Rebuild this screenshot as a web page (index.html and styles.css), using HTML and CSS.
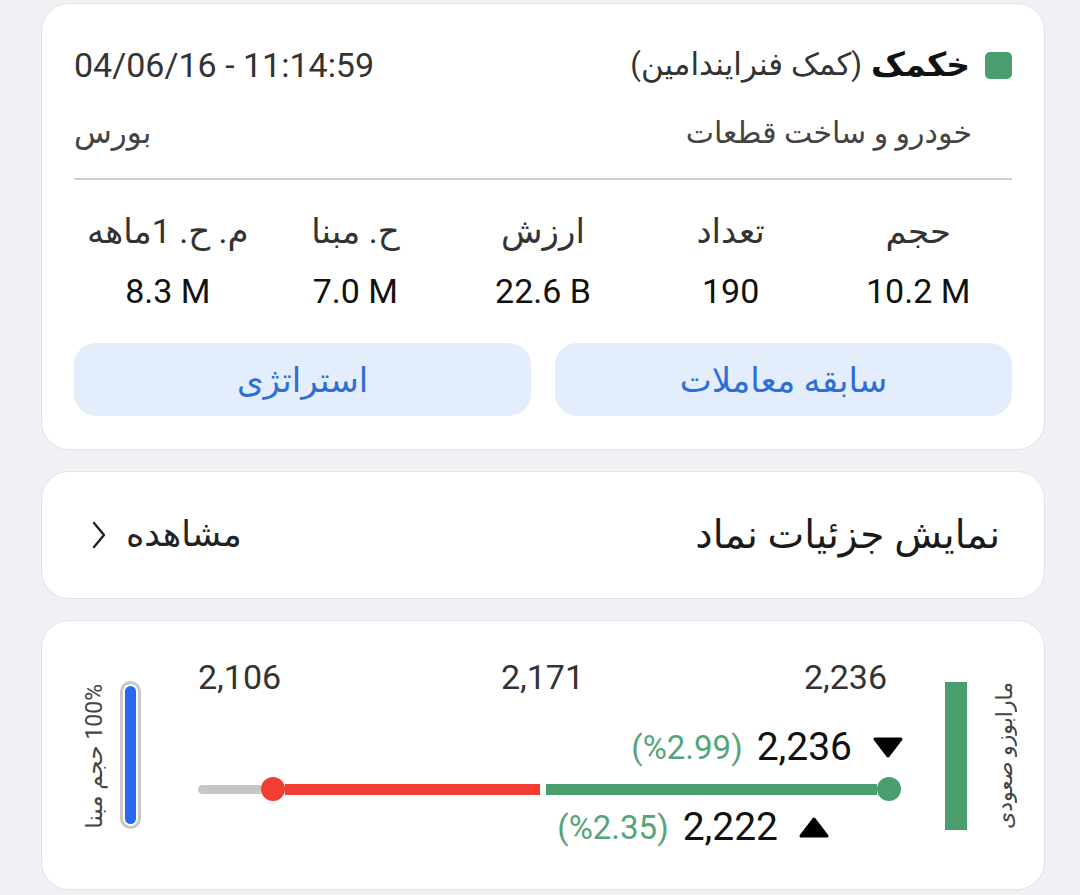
FILE: index.html
```html
<!DOCTYPE html>
<html lang="fa" dir="rtl">
<head>
<meta charset="utf-8">
<title>خکمک</title>
<link rel="stylesheet" href="styles.css">
</head>
<body>
<main class="page">
  <section class="card info">
    <div class="row head">
      <div class="symbol">
        <span class="dot"></span>
        <span class="ticker">خکمک</span>
        <span class="fullname">(کمک فنرایندامین)</span>
      </div>
      <div class="datetime" dir="ltr">04/06/16 - 11:14:59</div>
    </div>
    <div class="row sub">
      <div class="industry">خودرو و ساخت قطعات</div>
      <div class="market">بورس</div>
    </div>
    <div class="divider"></div>
    <div class="stats">
      <div class="stat"><div class="label">حجم</div><div class="value">10.2 M</div></div>
      <div class="stat"><div class="label">تعداد</div><div class="value">190</div></div>
      <div class="stat"><div class="label">ارزش</div><div class="value">22.6 B</div></div>
      <div class="stat"><div class="label">ح. مبنا</div><div class="value">7.0 M</div></div>
      <div class="stat"><div class="label">م. ح. 1ماهه</div><div class="value">8.3 M</div></div>
    </div>
    <div class="actions">
      <button class="btn" type="button">سابقه معاملات</button>
      <button class="btn" type="button">استراتژی</button>
    </div>
  </section>

  <section class="card details">
    <div class="details-title">نمایش جزئیات نماد</div>
    <div class="view">
      <span>مشاهده</span>
      <svg class="chev" width="14" height="28" viewBox="0 0 14 28"><polyline points="2,2 12,14 2,26" fill="none" stroke="#222" stroke-width="2.4" stroke-linecap="round" stroke-linejoin="round"/></svg>
    </div>
  </section>

  <section class="card range">
    <div class="vtext">100% حجم مبنا</div>
    <div class="vol"><div class="vol-fill"></div></div>
    <div class="chart">
      <div class="ticks"><span>2,106</span><span>2,171</span><span>2,236</span></div>
      <div class="quote upper">
        <span class="pct">(%2.99)</span>
        <span class="price">2,236</span>
        <svg class="tri" width="32" height="23" viewBox="0 0 32 23"><path d="M3 3 H29 L16 20 Z" fill="#000" stroke="#000" stroke-width="3" stroke-linejoin="round"/></svg>
      </div>
      <div class="slider">
        <span class="seg gray"></span>
        <span class="knob red"></span>
        <span class="seg redline"></span>
        <span class="seg greenline"></span>
        <span class="knob green"></span>
      </div>
      <div class="quote lower">
        <span class="pct">(%2.35)</span>
        <span class="price">2,222</span>
        <svg class="tri" width="32" height="23" viewBox="0 0 32 23"><path d="M3 20 H29 L16 3 Z" fill="#000" stroke="#000" stroke-width="3" stroke-linejoin="round"/></svg>
      </div>
    </div>
    <div class="mbar"></div>
    <div class="vtext right">مارابوزو صعودی</div>
  </section>
</main>
</body>
</html>
```

FILE: styles.css
```css
* {
  box-sizing: border-box;
  margin: 0;
  padding: 0;
}

html,
body {
  background: #f1f1f5;
}

body {
  font-family: Roboto, "DejaVu Sans", sans-serif;
  color: #222;
}

.page {
  padding: 3px 35px 0 41px;
  display: flex;
  flex-direction: column;
  gap: 21px;
}

.card {
  background: #fff;
  border: 1px solid #e2e2e8;
  border-radius: 28px;
}

/* ---------- info card ---------- */
.info {
  padding: 36px 32px 33px;
}

.row {
  display: flex;
  justify-content: space-between;
  align-items: center;
}

.head {
  height: 50px;
}

.symbol {
  display: flex;
  align-items: center;
  line-height: 50px;
}

.dot {
  width: 27px;
  height: 27px;
  border-radius: 5px;
  background: #4a9e6e;
  margin-left: 15px;
}

.ticker {
  font-weight: 700;
  font-size: 33px;
  color: #111;
  margin-left: 9px;
}

.fullname {
  font-size: 31px;
  color: #333;
}

.datetime {
  font-size: 34px;
  color: #333;
}

.sub {
  height: 40px;
  margin-top: 23px;
  line-height: 40px;
}

.industry {
  font-size: 30px;
  color: #444;
  margin-right: 40px;
}

.market {
  font-size: 31px;
  color: #444;
}

.divider {
  height: 2px;
  background: #d0d0d0;
  margin-top: 25px;
}

.stats {
  display: grid;
  grid-template-columns: repeat(5, 1fr);
  margin-top: 31px;
}

.stat {
  text-align: center;
}

.label {
  font-size: 34px;
  line-height: 40px;
  color: #333;
}

.value {
  font-size: 34px;
  line-height: 40px;
  color: #111;
  margin-top: 20px;
  direction: ltr;
}

.actions {
  display: grid;
  grid-template-columns: 1fr 1fr;
  gap: 24px;
  margin-top: 32px;
}

.btn {
  height: 73px;
  border: none;
  border-radius: 22px;
  background: #e4edfb;
  color: #2e6fd6;
  font: inherit;
  font-size: 34px;
}

/* ---------- details card ---------- */
.details {
  height: 128px;
  padding: 0 44px 0 50px;
  display: flex;
  align-items: center;
  justify-content: space-between;
}

.details-title {
  font-size: 39px;
  line-height: 50px;
  color: #1a1a1a;
}

.view {
  display: flex;
  align-items: center;
  gap: 20px;
  font-size: 35px;
  line-height: 50px;
  color: #222;
}

.chev {
  display: block;
}

/* ---------- range card ---------- */
.range {
  padding: 36px 29px 40px 43px;
  display: flex;
  align-items: center;
  direction: ltr;
}

.vtext {
  writing-mode: vertical-rl;
  transform: rotate(180deg);
  direction: rtl;
  font-size: 23px;
  line-height: 20px;
  width: 20px;
  color: #444;
  white-space: nowrap;
  margin-top: 6px;
}

.vtext.right {
  margin-left: 28px;
  font-size: 22px;
}

.vol {
  width: 21px;
  height: 148px;
  margin-left: 15px;
  margin-top: 4px;
  border: 3px solid #c9c9c9;
  border-radius: 11px;
  padding: 2px;
  background: #fff;
}

.vol-fill {
  height: 100%;
  background: #2469ee;
  border-radius: 6px;
}

.chart {
  width: 706px;
  margin-left: 57px;
  display: flex;
  flex-direction: column;
}

.ticks {
  display: flex;
  justify-content: space-between;
  padding-right: 17px;
  font-size: 34px;
  line-height: 40px;
  color: #333;
}

.quote {
  display: flex;
  justify-content: flex-end;
  align-items: center;
  height: 44px;
}

.quote.upper {
  margin-top: 28px;
}

.quote.lower {
  margin-top: 4px;
  padding-right: 74px;
}

.pct {
  font-size: 33px;
  color: #55a57a;
  margin-right: 14px;
}

.price {
  font-size: 39px;
  color: #111;
  margin-right: 20px;
}

.tri {
  display: block;
}

.slider {
  display: flex;
  align-items: center;
  height: 24px;
  margin-top: 8px;
}

.seg {
  display: block;
}

.gray {
  width: 63px;
  height: 9px;
  background: #c6c6c6;
  border-radius: 5px 0 0 5px;
}

.knob {
  display: block;
  width: 24px;
  height: 24px;
  border-radius: 50%;
}

.knob.red {
  background: #f23d33;
}

.knob.green {
  background: #4a9e6e;
}

.redline {
  width: 255px;
  height: 11px;
  background: #f23d33;
}

.greenline {
  width: 331px;
  height: 11px;
  margin-left: 6px;
  background: #4a9e6e;
}

.mbar {
  width: 22px;
  height: 148px;
  margin-left: 41px;
  margin-top: 6px;
  background: #4a9e6e;
}
```
